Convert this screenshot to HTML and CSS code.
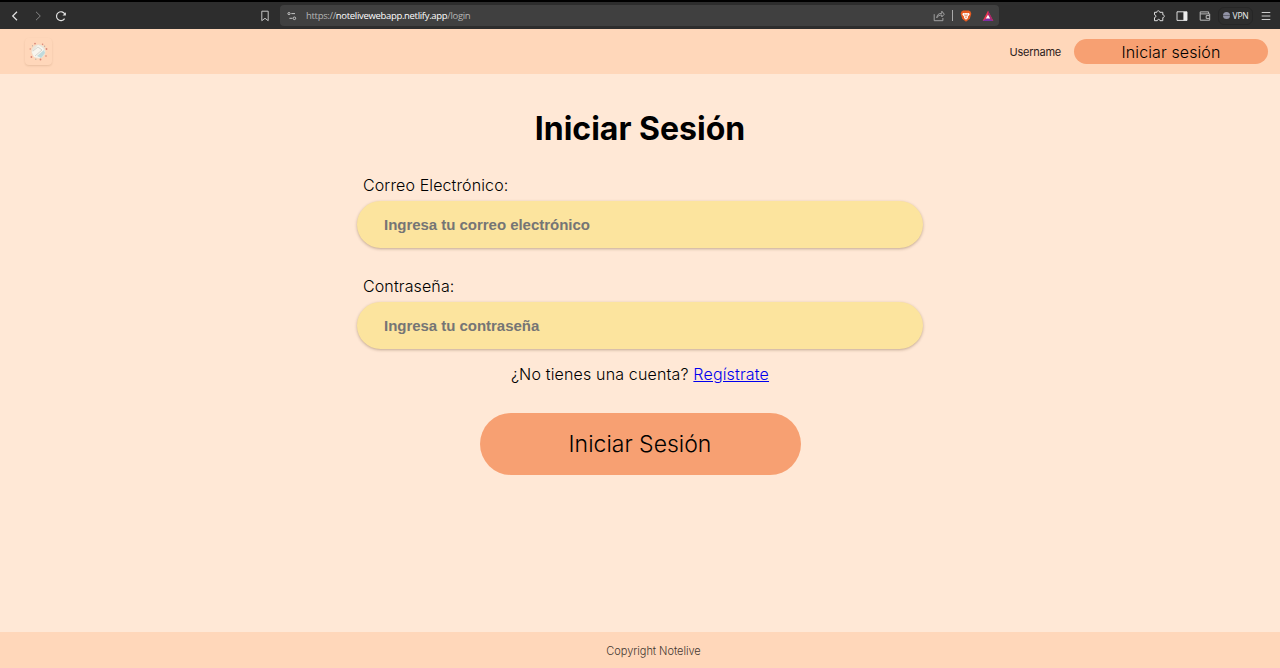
FILE: index.html
```html
<!DOCTYPE html>
<html lang="es">
<head>
<meta charset="utf-8">
<title>Notelive</title>
<link rel="stylesheet" href="styles.css">
</head>
<body>
<div class="toolbar">
  <div class="nav">
    <svg class="icon" viewBox="0 0 12 12"><path d="M8 1.8 3.7 6 8 10.2" stroke="#e2e2e2" stroke-width="1.2"/></svg>
    <svg class="icon" viewBox="0 0 12 12"><path d="M4 1.8 8.3 6 4 10.2" stroke="#858585"/></svg>
    <svg class="icon" viewBox="0 0 12 12"><path d="M9.6 8.6A4.4 4.4 0 1 1 9.9 4.3" stroke="#e2e2e2" stroke-width="1.2"/><path d="M10.9 2.2v3.4H7.5z" fill="#e2e2e2" stroke="none"/></svg>
  </div>
  <svg class="icon bookmark" viewBox="0 0 12 12"><path d="M2.8 1.2h6.4v9.5L6 8.3l-3.2 2.4z"/></svg>
  <div class="address">
    <svg class="icon" viewBox="0 0 12 12"><circle cx="3" cy="3.6" r="1.1"/><path d="M5.3 3.6H9M3.4 8.3h3"/><circle cx="8.4" cy="8.3" r="1.3"/></svg>
    <div class="url">https://<b>notelivewebapp.netlify.app</b>/login</div>
    <svg class="icon" viewBox="0 0 12 12"><path d="M1.2 4.2v6.5h8.7V8M3.8 7.8c.2-3 1.8-4.5 5-4.5V1.2l2.5 3-2.5 2.7V5c-2.3 0-3.8.7-5 2.8z" stroke="#aaa" stroke-width=".9"/></svg>
    <i class="divider"></i>
    <svg class="icon shield" viewBox="0 0 12 12"><path d="M3.2.4h5.6l1.7 1.2.8 2.2-1.5 5L6 11.8 2.2 8.8l-1.5-5 .8-2.2z" fill="#e75b21" stroke="none"/><path d="m3 3 1.8.3L6 3l1.2.3L9 3l.7 1.5-1.9 2.3.2 1.2L6 9.8 4 8l.2-1.2-1.9-2.3z" fill="#fff" stroke="none"/><path d="m4 4.6 1.3.7-.5.8M8 4.6l-1.3.7.5.8M6 4v3M5 8l1-.7 1 .7" stroke="#e75b21" stroke-width=".6"/></svg>
    <svg class="icon bat" viewBox="0 0 12 12"><path d="M6 .8 11.4 11H.6z" fill="#e9364e" stroke="none"/><path d="M.6 11 6 7.5l5.4 3.5z" fill="#7b2fa5" stroke="none"/><path d="M6 .8 11.4 11 6 7.7z" fill="#a62871" stroke="none"/><path d="M6 4.7 8.2 8.5H3.8z" fill="#fff" stroke="none"/></svg>
  </div>
  <div class="tools">
    <svg class="icon" viewBox="0 0 12 12"><path d="M1.5 2.3h2.3c0-2 3-2 3 0h3v2.5c2 0 2 2.8 0 2.8v3.1H7c0-1.8-2.7-1.8-2.7 0H1.5V7.6c1.9 0 1.9-2.8 0-2.8z" stroke="#ddd"/></svg>
    <svg class="icon" viewBox="0 0 12 12"><path d="M1 1.8h10v8.6H1z" stroke="#ddd"/><path d="M7.4 1.8H11v8.6H7.4z" fill="#eee" stroke="none"/></svg>
    <svg class="icon" viewBox="0 0 12 12"><path d="M9.6 3.8V1.9H1.2v8.3h9.5V3.9H1.2M10.7 5.6H7.2v2.8h3.5" stroke="#bbb"/></svg>
  </div>
  <div class="vpn"><i></i>VPN</div>
  <svg class="icon menu" viewBox="0 0 12 12"><path d="M1.7 2.5h8.6M1.7 6h8.6M1.7 9.5h8.6" stroke="#ccc"/></svg>
</div>
<header class="header">
  <div class="logo">
    <svg viewBox="0 0 27 27"><circle cx="13.5" cy="13.5" r="7" fill="#e9e6db"/><path d="m7 14 6-7 5 3 2 4-5 6-6-1z" fill="#f8f5ee"/><path d="m12 18 7-6 1 3-4 5z" fill="#bfdadc"/><path d="m8 13 5-4 4 3-7 6" fill="none" stroke="#d9d6cf"/><g fill="#d98678"><circle cx="10" cy="5.6" r=".9"/><circle cx="17.6" cy="6.3" r=".8"/><circle cx="5.2" cy="11" r=".7"/><circle cx="21.5" cy="11" r=".9"/><circle cx="6.4" cy="19" r=".9"/><circle cx="15.5" cy="21.5" r=".9"/><circle cx="21" cy="18" r=".8"/></g><g fill="#a9aaa6"><circle cx="7.5" cy="7.8" r=".6"/><circle cx="10.8" cy="21.2" r=".6"/><circle cx="19.6" cy="8.2" r=".6"/></g></svg>
  </div>
  <div class="username">Username</div>
  <button class="header-login">Iniciar sesión</button>
</header>
<main class="main">
  <h1 class="title">Iniciar Sesión</h1>
  <form class="form">
    <label class="label" for="email">Correo Electrónico:</label>
    <input class="field" id="email" type="email" placeholder="Ingresa tu correo electrónico">
    <label class="label second" for="password">Contraseña:</label>
    <input class="field" id="password" type="password" placeholder="Ingresa tu contraseña">
    <p class="register">¿No tienes una cuenta? <a href="#">Regístrate</a></p>
    <button class="submit" type="button">Iniciar Sesión</button>
  </form>
</main>
<footer class="footer">Copyright Notelive</footer>
</body>
</html>
```
FILE: styles.css
```css
* { box-sizing: border-box; }
body {
  margin: 0;
  height: 668px;
  display: flex;
  flex-direction: column;
  overflow: hidden;
  background: #ffe8d6;
  color: #000;
  font-family: Inter, "Liberation Sans", sans-serif;
  font-weight: 300;
}
button { border: 0; padding: 0; color: #000; font-family: inherit; font-weight: 300; background: #f7a072; }
.toolbar {
  height: 29px;
  flex: none;
  display: flex;
  align-items: center;
  padding: 0 8px 0 9px;
  border-top: 2px solid #000;
  background: #2d2d2d;
}
.icon { width: 12px; height: 12px; flex: none; fill: none; stroke: #c5c5c5; stroke-width: 1; }
.nav, .tools { display: flex; gap: 11px; }
.bookmark { margin-left: 192px; }
.address {
  width: 720px;
  height: 21px;
  margin-left: 9px;
  padding: 0 5px 0 6px;
  display: flex;
  align-items: center;
  border-radius: 4px;
  background: #404040;
}
.url { flex: 1; margin-left: 8px; color: #b5b5b5; font: 400 9.5px/12px "Open Sans", sans-serif; letter-spacing: -.32px; }
.url b { color: #fff; font-weight: 500; }
.divider { width: 1px; height: 11px; margin: 0 7px; background: #aaa; }
.bat { margin-left: 10px; }
.tools { margin-left: 154px; }
.vpn {
  width: 35px;
  height: 18px;
  margin-left: 7px;
  display: flex;
  align-items: center;
  justify-content: center;
  gap: 3px;
  border: 1px solid #262626;
  border-radius: 6px;
  color: #eee;
  font: 500 8.5px/10px "Open Sans", sans-serif;
  letter-spacing: -.2px;
}
.vpn i { width: 7px; height: 7px; border-radius: 50%; background: linear-gradient(#9192a5 3px, #62636f 3px 4px, #9192a5 4px); }
.menu { margin-left: 7px; }
.header {
  height: 45px;
  flex: none;
  display: flex;
  align-items: center;
  padding: 0 12px 0 25px;
  background: #ffd7ba;
}
.logo { width: 27px; height: 27px; border-radius: 4px; box-shadow: 0 1px 2px rgba(110, 60, 30, .15); }
.logo svg { display: block; }
.username { margin-left: auto; padding-top: 1px; font-size: 11px; font-weight: 400; letter-spacing: -.25px; color: #2d211c; }
.header-login { width: 194px; height: 25px; margin-left: 13px; border-radius: 13px; font-size: 16px; letter-spacing: .1px; }
.main { flex: 1; display: flex; flex-direction: column; align-items: center; }
.title { margin: 35px 0 0; font-size: 32px; line-height: 40px; font-weight: 700; }
.form { width: 566px; margin-top: 26px; display: flex; flex-direction: column; align-items: center; }
.label { align-self: flex-start; padding-left: 6px; height: 26px; font-size: 16px; line-height: 20px; letter-spacing: .12px; }
.field {
  width: 566px;
  height: 47px;
  padding: 0 27px;
  border: 0;
  border-radius: 24px;
  background: #fce49e;
  box-shadow: 0 1px 3px rgba(80, 50, 20, .35);
  font: 700 15px "Liberation Sans", sans-serif;
  letter-spacing: -.03px;
}
.field::placeholder { color: #757575; opacity: 1; }
.second { margin-top: 28px; }
.register { margin: 14px 0 0; font-size: 16px; line-height: 22px; letter-spacing: .16px; }
.register a { color: #0000ee; }
.submit { width: 321px; height: 62px; margin-top: 28px; border-radius: 31px; font-size: 23px; }
.footer {
  height: 36px;
  flex: none;
  display: flex;
  align-items: center;
  justify-content: center;
  padding-top: 2px;
  padding-left: 27px;
  background: #ffd7ba;
  color: #443831;
  font-size: 11px;
  letter-spacing: -.04px;
}
```
